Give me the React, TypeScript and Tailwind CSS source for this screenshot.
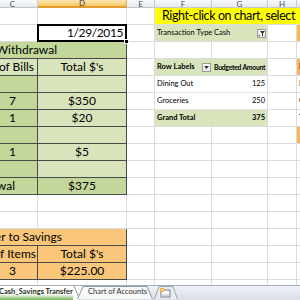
import React from "react";

type P = { className?: string; children?: React.ReactNode };

function Cell({ className = "", children }: P) {
  return (
    <div className={`flex items-center overflow-hidden whitespace-nowrap ${className}`}>
      {children}
    </div>
  );
}

const W = "bg-white border-r border-b border-[#dadcdd]";
const HD = "justify-center bg-linear-to-b from-[#f9fafb] to-[#e6e9ed] border-r border-b border-[#c4c9d0] text-[8px] text-[#4b4b4b] leading-none";
const HDA = "justify-center bg-linear-to-b from-[#fce7b2] to-[#f6c766] border-r border-b-2 border-r-[#d8b15c] border-b-[#e39b2d] text-[8px] text-[#3b3b3b] leading-none";
const GC = "bg-[#c4d79b] border-r border-b border-[#4a4a4a] text-[12px]";
const GD = "bg-[#d8e4bc] border-r border-b border-[#4a4a4a] text-[12px]";
const OR = "bg-[#f9c67a] border-r border-b border-[#4a4a4a] text-[12px]";
const PV = "bg-[#d8e4bc] border-b border-[#dadcdd] text-[7.5px]";
const PW = "bg-white border-b border-[#e4e4e4] text-[7.5px]";

function FilterBtn() {
  return (
    <div className="ml-auto mr-[1px] w-[9px] h-[9px] bg-linear-to-b from-[#ffffff] to-[#e8e8e8] border border-[#9a9a9a] flex items-center justify-center">
      <svg width="7" height="7" viewBox="0 0 7 7">
        <rect x="0.5" y="5" width="1.2" height="1.2" fill="#333" />
        <path d="M2 1 H7 L5 3.5 V6.5 L4 6 V3.5 Z" fill="#333" />
      </svg>
    </div>
  );
}

function DropBtn() {
  return (
    <div className="ml-auto mr-[1px] w-[9px] h-[9px] bg-linear-to-b from-[#ffffff] to-[#e8e8e8] border border-[#9a9a9a] flex items-center justify-center">
      <svg width="5" height="3" viewBox="0 0 5 3">
        <path d="M0 0 H5 L2.5 3 Z" fill="#333" />
      </svg>
    </div>
  );
}

export default function App() {
  return (
    <div className="w-[300px] h-[300px] overflow-hidden bg-white relative font-[Lato,sans-serif] text-black">
      <div className="ml-[-12px] grid grid-cols-[50px_89px_28px_57px_56px_29px_60px] grid-rows-[8px_repeat(16,17px)_5px]">
        {/* header */}
        <Cell className={HD}>C</Cell>
        <Cell className={HDA}>D</Cell>
        <Cell className={HD}>E</Cell>
        <Cell className={HD}>F</Cell>
        <Cell className={HD}>G</Cell>
        <Cell className={HD}>H</Cell>
        <Cell className={HD}>I</Cell>

        {/* row 1 */}
        <Cell className={W} />
        <Cell className={W} />
        <Cell className={W} />
        <Cell className="col-span-4 bg-[#ffff00] border-b border-[#dadcdd] text-[12.5px] tracking-[-0.4px] pl-[7px]">
          Right-click on chart, select
        </Cell>

        {/* row 2 */}
        <Cell className={W} />
        <div className="relative bg-white border-r border-b border-[#dadcdd] flex items-center justify-end pr-[3px] text-[12px] tracking-[-0.4px]">
          1/29/2015
          <div className="absolute left-[-1px] top-[-1px] right-[-1px] bottom-[-1px] border-2 border-black" />
          <div className="absolute right-[-3px] bottom-[-3px] w-[5px] h-[5px] bg-black border border-white" />
        </div>
        <Cell className={W} />
        <Cell className={`${PV} pl-[2px]`}>Transaction Type</Cell>
        <Cell className={`${PV} border-r border-r-[#dadcdd] pl-[2px]`}>
          Cash
          <FilterBtn />
        </Cell>
        <Cell className={W} />
        <Cell className="bg-[#f5bd4f] border-b border-[#dadcdd]" />

        {/* row 3 */}
        <Cell className={`col-span-2 ${GC} justify-end pr-[69px] text-[12.5px]`}>Cash Withdrawal</Cell>
        <Cell className={W} />
        <Cell className={W} />
        <Cell className={W} />
        <Cell className={W} />
        <Cell className={W} />

        {/* row 4 */}
        <Cell className={`${GD} justify-end pr-[3px]`}># of Bills</Cell>
        <Cell className={`${GD} justify-center`}>Total $'s</Cell>
        <Cell className={W} />
        <Cell className={`${PV} pl-[2px] font-bold`}>
          Row Labels
          <DropBtn />
        </Cell>
        <Cell className="bg-[#d8e4bc] border-b border-r border-[#dadcdd] pl-[2px] font-bold text-[6.8px] tracking-[-0.25px]">Budgeted Amount</Cell>
        <Cell className={W} />
        <Cell className="bg-[#f8b65e] border-b border-[#dadcdd] text-[7.5px] font-bold pl-[2px]">Row Labels</Cell>

        {/* row 5 */}
        <Cell className={GC} />
        <Cell className={GD} />
        <Cell className={W} />
        <Cell className={`${PW} pl-[2px]`}>Dining Out</Cell>
        <Cell className={`${PW} border-r border-r-[#dadcdd] justify-end pr-[2px]`}>125</Cell>
        <Cell className={W} />
        <Cell className={`${W} text-[7.5px] pl-[2px]`}>Dining Out</Cell>

        {/* row 6 */}
        <Cell className={`${GC} justify-center`}>7</Cell>
        <Cell className={`${GD} justify-center`}>$350</Cell>
        <Cell className={W} />
        <Cell className={`${PW} pl-[2px]`}>Groceries</Cell>
        <Cell className={`${PW} border-r border-r-[#dadcdd] justify-end pr-[2px]`}>250</Cell>
        <Cell className={W} />
        <Cell className={`${W} text-[7.5px] pl-[2px]`}>Groceries</Cell>

        {/* row 7 */}
        <Cell className={`${GC} justify-center`}>1</Cell>
        <Cell className={`${GD} justify-center`}>$20</Cell>
        <Cell className={W} />
        <Cell className={`${PV} pl-[2px] font-bold`}>Grand Total</Cell>
        <Cell className={`${PV} border-r border-r-[#dadcdd] justify-end pr-[2px] font-bold`}>375</Cell>
        <Cell className={W} />
        <Cell className={`${W} text-[7.5px] pl-[2px] font-bold`}>Total</Cell>

        {/* row 8 */}
        <Cell className={GC} />
        <Cell className={GD} />
        <Cell className={W} />
        <Cell className={W} />
        <Cell className={W} />
        <Cell className={W} />
        <Cell className="bg-[#f8b65e] border-b border-[#dadcdd]" />

        {/* row 9 */}
        <Cell className={`${GC} justify-center`}>1</Cell>
        <Cell className={`${GD} justify-center`}>$5</Cell>
        <Cell className={W} />
        <Cell className={W} />
        <Cell className={W} />
        <Cell className={W} />
        <Cell className={W} />

        {/* row 10 */}
        <Cell className={GC} />
        <Cell className={GD} />
        <Cell className={W} />
        <Cell className={W} />
        <Cell className={W} />
        <Cell className={W} />
        <Cell className={W} />

        {/* row 11 */}
        <Cell className={`${GC} justify-end pr-[22px]`}>Total Withdrawal</Cell>
        <Cell className={`${GC} justify-center`}>$375</Cell>
        <Cell className={W} />
        <Cell className={W} />
        <Cell className={W} />
        <Cell className={W} />
        <Cell className={W} />

        {/* rows 12-13 */}
        {Array.from({ length: 14 }).map((_, i) => (
          <Cell key={`e${i}`} className={W} />
        ))}

        {/* row 14 */}
        <Cell className={`col-span-2 ${OR} justify-end pr-[64px] text-[12.5px]`}>Transfer to Savings</Cell>
        <Cell className={W} />
        <Cell className={W} />
        <Cell className={W} />
        <Cell className={W} />
        <Cell className={W} />

        {/* row 15 */}
        <Cell className={`${OR} justify-end pr-[1px]`}># of Items</Cell>
        <Cell className={`${OR} justify-center`}>Total $'s</Cell>
        <Cell className={W} />
        <Cell className={W} />
        <Cell className={W} />
        <Cell className={W} />
        <Cell className={W} />

        {/* row 16 */}
        <Cell className={`${OR} justify-center`}>3</Cell>
        <Cell className={`${OR} justify-center`}>$225.00</Cell>
        <Cell className={W} />
        <Cell className={W} />
        <Cell className={W} />
        <Cell className={W} />
        <Cell className={W} />

        {/* partial row */}
        {Array.from({ length: 7 }).map((_, i) => (
          <Cell key={`p${i}`} className="bg-white border-r border-[#dadcdd]" />
        ))}
      </div>

      {/* sheet tabs */}
      <div className="h-[15px] flex items-start bg-linear-to-b from-[#eef1f5] to-[#d9dfe7] border-t border-[#a3adbb]">
        <div className="relative ml-[-3px] w-[84px] h-[14px] bg-white flex items-start pt-[1px] pl-[2px]">
          <span className="relative z-10 text-[7.5px] font-bold leading-[9px] text-[#1c301a]">Cash_Savings Transfer</span>
          <div className="absolute left-0 right-[6px] bottom-0 h-[5px] bg-linear-to-b from-[#e6f3de] to-[#74b65a]" />
          <svg className="absolute right-0 top-0" width="8" height="14" viewBox="0 0 8 14">
            <path d="M0 0 L0 14 L8 14 Z" fill="#ffffff" />
            <path d="M1 0 L7 14" stroke="#8c96a4" strokeWidth="1" fill="none" />
          </svg>
        </div>
        <div className="relative w-[72px] h-[13px] flex items-start pl-[7px] pt-[1px]">
          <svg className="absolute left-[-4px] top-0" width="76" height="13" viewBox="0 0 76 13">
            <path d="M0.5 13 L6 0.5 H70 L75.5 13" fill="#f7f8fa" stroke="#8c96a4" strokeWidth="1" />
          </svg>
          <span className="relative text-[7.5px] leading-[9px] text-[#333]">Chart of Accounts</span>
        </div>
        <div className="relative ml-[1px] w-[24px] h-[13px]">
          <svg className="absolute left-0 top-0" width="24" height="13" viewBox="0 0 24 13">
            <path d="M0.5 13 L5 0.5 H19 L23.5 13" fill="#e9edf2" stroke="#9aa4b1" strokeWidth="1" />
            <rect x="7" y="4" width="9" height="7" fill="#ffffff" stroke="#6d7b8d" strokeWidth="1" />
            <rect x="8" y="8" width="7" height="2" fill="#cfd8e3" />
            <circle cx="8" cy="4" r="2.2" fill="#f3a628" />
            <circle cx="8" cy="4" r="1" fill="#fff3c2" />
          </svg>
        </div>
      </div>
    </div>
  );
}
